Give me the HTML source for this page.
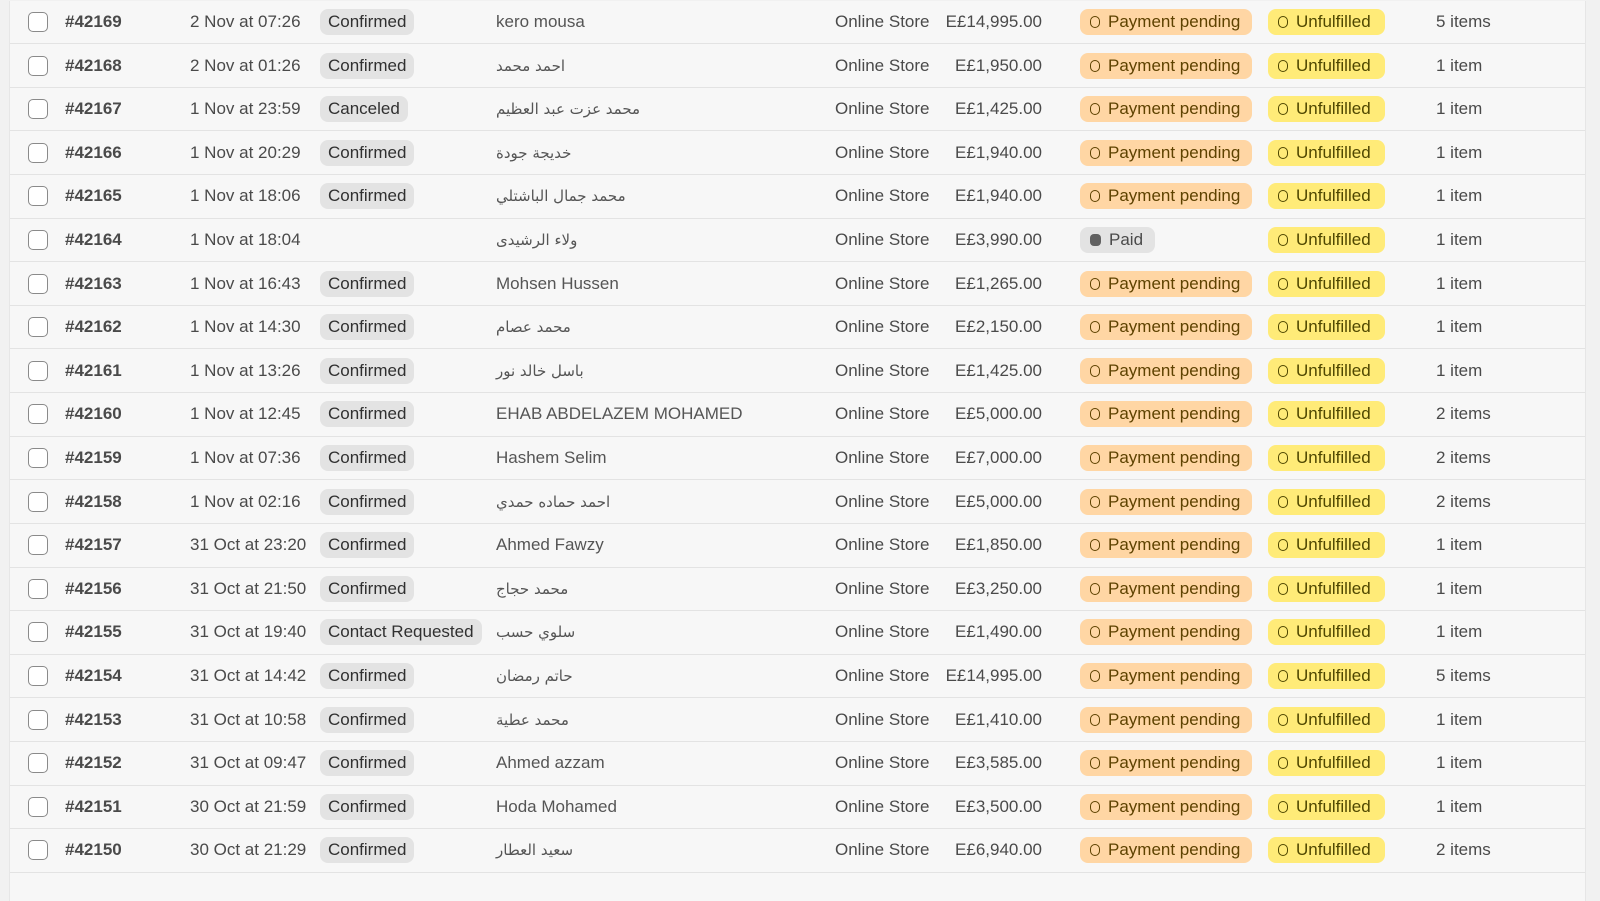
<!DOCTYPE html>
<html><head><meta charset="utf-8"><style>
body{margin:0;width:1600px;height:876px;background:#f1f1f1;overflow:hidden;font-family:"Liberation Sans","DejaVu Sans",sans-serif;font-size:17px;color:#4a4a4a}
.t{position:absolute;left:9px;top:0.6px;width:1575px;height:900px;background:#f7f7f7;border-left:1px solid #e6e6e6;border-right:1px solid #e6e6e6}
.r{position:relative;height:42.62px;border-bottom:1px solid #e3e3e3}
.r>*{position:absolute;top:50%;transform:translateY(-50%);white-space:nowrap}
.cb{left:18px;width:18px;height:18px;border:1.5px solid #8a8a8a;border-radius:5px;background:#fff}
.id{left:55px;font-weight:bold;color:#4a4a4a}
.d{left:180px}
.s{left:310px;background:#e3e3e3;border-radius:8px;padding:3px 8px;color:#303030}
.c{left:486px;color:#555}
.ar{font-family:"DejaVu Sans",sans-serif;font-size:15px}
.ch{left:825px}
.m{right:543px}
.p{left:1070px;background:#ffd6a4;color:#5e4200;border-radius:8px;padding:3px 12px 3px 10px}
.u{left:1258px;background:#ffeb78;color:#4f4700;border-radius:8px;padding:3px 14px 3px 10px}
.pd{left:1070px;background:#e3e3e3;color:#4a4a4a;border-radius:8px;padding:3px 12px 3px 10px}
.o{display:inline-block;width:8px;height:10px;border:1.8px solid currentColor;border-radius:5px;margin-right:8px;vertical-align:-1px}
.f{display:inline-block;width:11px;height:12px;background:#616161;border-radius:4px;margin-right:8px;vertical-align:-1px}
.i{left:1426px}
</style></head><body><div class="t">
<div class="r"><i class="cb"></i><b class="id">#42169</b><span class="d">2 Nov at 07:26</span><span class="s">Confirmed</span><span class="c">kero mousa</span><span class="ch">Online Store</span><span class="m">E£14,995.00</span><span class="p"><i class="o"></i>Payment pending</span><span class="u"><i class="o"></i>Unfulfilled</span><span class="i">5 items</span></div>
<div class="r"><i class="cb"></i><b class="id">#42168</b><span class="d">2 Nov at 01:26</span><span class="s">Confirmed</span><span class="c ar">احمد محمد</span><span class="ch">Online Store</span><span class="m">E£1,950.00</span><span class="p"><i class="o"></i>Payment pending</span><span class="u"><i class="o"></i>Unfulfilled</span><span class="i">1 item</span></div>
<div class="r"><i class="cb"></i><b class="id">#42167</b><span class="d">1 Nov at 23:59</span><span class="s">Canceled</span><span class="c ar">محمد عزت عبد العظيم</span><span class="ch">Online Store</span><span class="m">E£1,425.00</span><span class="p"><i class="o"></i>Payment pending</span><span class="u"><i class="o"></i>Unfulfilled</span><span class="i">1 item</span></div>
<div class="r"><i class="cb"></i><b class="id">#42166</b><span class="d">1 Nov at 20:29</span><span class="s">Confirmed</span><span class="c ar">خديجة جودة</span><span class="ch">Online Store</span><span class="m">E£1,940.00</span><span class="p"><i class="o"></i>Payment pending</span><span class="u"><i class="o"></i>Unfulfilled</span><span class="i">1 item</span></div>
<div class="r"><i class="cb"></i><b class="id">#42165</b><span class="d">1 Nov at 18:06</span><span class="s">Confirmed</span><span class="c ar">محمد جمال الباشتلي</span><span class="ch">Online Store</span><span class="m">E£1,940.00</span><span class="p"><i class="o"></i>Payment pending</span><span class="u"><i class="o"></i>Unfulfilled</span><span class="i">1 item</span></div>
<div class="r"><i class="cb"></i><b class="id">#42164</b><span class="d">1 Nov at 18:04</span><span class="c ar">ولاء الرشيدى</span><span class="ch">Online Store</span><span class="m">E£3,990.00</span><span class="pd"><i class="f"></i>Paid</span><span class="u"><i class="o"></i>Unfulfilled</span><span class="i">1 item</span></div>
<div class="r"><i class="cb"></i><b class="id">#42163</b><span class="d">1 Nov at 16:43</span><span class="s">Confirmed</span><span class="c">Mohsen Hussen</span><span class="ch">Online Store</span><span class="m">E£1,265.00</span><span class="p"><i class="o"></i>Payment pending</span><span class="u"><i class="o"></i>Unfulfilled</span><span class="i">1 item</span></div>
<div class="r"><i class="cb"></i><b class="id">#42162</b><span class="d">1 Nov at 14:30</span><span class="s">Confirmed</span><span class="c ar">محمد عصام</span><span class="ch">Online Store</span><span class="m">E£2,150.00</span><span class="p"><i class="o"></i>Payment pending</span><span class="u"><i class="o"></i>Unfulfilled</span><span class="i">1 item</span></div>
<div class="r"><i class="cb"></i><b class="id">#42161</b><span class="d">1 Nov at 13:26</span><span class="s">Confirmed</span><span class="c ar">باسل خالد نور</span><span class="ch">Online Store</span><span class="m">E£1,425.00</span><span class="p"><i class="o"></i>Payment pending</span><span class="u"><i class="o"></i>Unfulfilled</span><span class="i">1 item</span></div>
<div class="r"><i class="cb"></i><b class="id">#42160</b><span class="d">1 Nov at 12:45</span><span class="s">Confirmed</span><span class="c">EHAB ABDELAZEM MOHAMED</span><span class="ch">Online Store</span><span class="m">E£5,000.00</span><span class="p"><i class="o"></i>Payment pending</span><span class="u"><i class="o"></i>Unfulfilled</span><span class="i">2 items</span></div>
<div class="r"><i class="cb"></i><b class="id">#42159</b><span class="d">1 Nov at 07:36</span><span class="s">Confirmed</span><span class="c">Hashem Selim</span><span class="ch">Online Store</span><span class="m">E£7,000.00</span><span class="p"><i class="o"></i>Payment pending</span><span class="u"><i class="o"></i>Unfulfilled</span><span class="i">2 items</span></div>
<div class="r"><i class="cb"></i><b class="id">#42158</b><span class="d">1 Nov at 02:16</span><span class="s">Confirmed</span><span class="c ar">احمد حماده حمدي</span><span class="ch">Online Store</span><span class="m">E£5,000.00</span><span class="p"><i class="o"></i>Payment pending</span><span class="u"><i class="o"></i>Unfulfilled</span><span class="i">2 items</span></div>
<div class="r"><i class="cb"></i><b class="id">#42157</b><span class="d">31 Oct at 23:20</span><span class="s">Confirmed</span><span class="c">Ahmed Fawzy</span><span class="ch">Online Store</span><span class="m">E£1,850.00</span><span class="p"><i class="o"></i>Payment pending</span><span class="u"><i class="o"></i>Unfulfilled</span><span class="i">1 item</span></div>
<div class="r"><i class="cb"></i><b class="id">#42156</b><span class="d">31 Oct at 21:50</span><span class="s">Confirmed</span><span class="c ar">محمد حجاج</span><span class="ch">Online Store</span><span class="m">E£3,250.00</span><span class="p"><i class="o"></i>Payment pending</span><span class="u"><i class="o"></i>Unfulfilled</span><span class="i">1 item</span></div>
<div class="r"><i class="cb"></i><b class="id">#42155</b><span class="d">31 Oct at 19:40</span><span class="s">Contact Requested</span><span class="c ar">سلوي حسب</span><span class="ch">Online Store</span><span class="m">E£1,490.00</span><span class="p"><i class="o"></i>Payment pending</span><span class="u"><i class="o"></i>Unfulfilled</span><span class="i">1 item</span></div>
<div class="r"><i class="cb"></i><b class="id">#42154</b><span class="d">31 Oct at 14:42</span><span class="s">Confirmed</span><span class="c ar">حاتم رمضان</span><span class="ch">Online Store</span><span class="m">E£14,995.00</span><span class="p"><i class="o"></i>Payment pending</span><span class="u"><i class="o"></i>Unfulfilled</span><span class="i">5 items</span></div>
<div class="r"><i class="cb"></i><b class="id">#42153</b><span class="d">31 Oct at 10:58</span><span class="s">Confirmed</span><span class="c ar">محمد عطية</span><span class="ch">Online Store</span><span class="m">E£1,410.00</span><span class="p"><i class="o"></i>Payment pending</span><span class="u"><i class="o"></i>Unfulfilled</span><span class="i">1 item</span></div>
<div class="r"><i class="cb"></i><b class="id">#42152</b><span class="d">31 Oct at 09:47</span><span class="s">Confirmed</span><span class="c">Ahmed azzam</span><span class="ch">Online Store</span><span class="m">E£3,585.00</span><span class="p"><i class="o"></i>Payment pending</span><span class="u"><i class="o"></i>Unfulfilled</span><span class="i">1 item</span></div>
<div class="r"><i class="cb"></i><b class="id">#42151</b><span class="d">30 Oct at 21:59</span><span class="s">Confirmed</span><span class="c">Hoda Mohamed</span><span class="ch">Online Store</span><span class="m">E£3,500.00</span><span class="p"><i class="o"></i>Payment pending</span><span class="u"><i class="o"></i>Unfulfilled</span><span class="i">1 item</span></div>
<div class="r"><i class="cb"></i><b class="id">#42150</b><span class="d">30 Oct at 21:29</span><span class="s">Confirmed</span><span class="c ar">سعيد العطار</span><span class="ch">Online Store</span><span class="m">E£6,940.00</span><span class="p"><i class="o"></i>Payment pending</span><span class="u"><i class="o"></i>Unfulfilled</span><span class="i">2 items</span></div>
</div></body></html>
